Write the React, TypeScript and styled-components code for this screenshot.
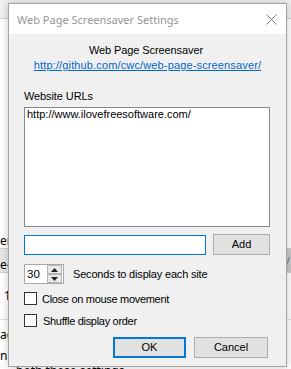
import React from "react";
import styled, { createGlobalStyle } from "styled-components";

const Global = createGlobalStyle`
  html, body { margin: 0; padding: 0; width: 291px; height: 369px; overflow: hidden; background: #fff; }
  #root { width: 291px; height: 369px; position: relative; overflow: hidden; }
`;

/* ---------- backdrop (page behind the dialog) ---------- */
const Page = styled.div`
  display: flex;
  flex-direction: column;
  width: 291px;
  height: 369px;
  font-family: "Noto Sans", "Liberation Sans", sans-serif;
  font-size: 12px;
  color: #000;
`;
const Toolbar = styled.div`
  height: 18px;
  background: #f0f0f0;
  border-bottom: 1px solid #d6d6d6;
  flex: none;
`;
const BlankArea = styled.div`
  height: 229px;
  display: flex;
  align-items: flex-end;
  flex: none;
`;
const Frag = styled.div<{ $pad?: number }>`
  line-height: 14px;
  padding-left: ${(p) => p.$pad ?? 0}px;
  white-space: nowrap;
`;
const Band = styled.div`
  height: 23px;
  flex: none;
  background: #e6e6e6;
  border-top: 1px solid #d0d0d0;
  border-bottom: 1px solid #d0d0d0;
  display: flex;
  align-items: flex-end;
  justify-content: space-between;
`;
const BandEdge = styled.div`
  width: 5px;
  height: 23px;
  background: #c9c9c9;
  color: #777;
  font-size: 11px;
  line-height: 23px;
`;
const TableRow = styled.div<{ $h: number; $line?: boolean; $end?: boolean }>`
  height: ${(p) => p.$h}px;
  flex: none;
  display: flex;
  align-items: ${(p) => (p.$end ? "flex-end" : "center")};
  border-bottom: ${(p) => (p.$line ? "1px solid #e0e0e0" : "none")};
`;
const BottomRow = styled.div`
  flex: none;
  padding-top: 1px;
`;

/* ---------- dialog ---------- */
const Dialog = styled.div`
  position: absolute;
  left: 8px;
  top: 3px;
  width: 279px;
  height: 364px;
  box-sizing: border-box;
  border: 1px solid #a3a3a3;
  background: #f0f0f0;
  box-shadow: 0 0 8px rgba(0, 0, 0, 0.22);
  display: flex;
  flex-direction: column;
`;
const TitleBar = styled.div`
  height: 30px;
  flex: none;
  background: #fff;
  display: flex;
  align-items: center;
  justify-content: space-between;
  padding: 0 9px 0 8px;
`;
const Title = styled.div`
  font-family: "Noto Sans", "Open Sans", sans-serif;
  font-size: 11px;
  color: #959595;
  padding-top: 1px;
`;
const Close = styled.svg`
  width: 11px;
  height: 11px;
  display: block;
`;
const Body = styled.div`
  flex: 1;
  display: flex;
  flex-direction: column;
  padding: 10px 15px 0 15px;
  font-family: "Liberation Sans", Arial, sans-serif;
  font-size: 11px;
  line-height: 13px;
  color: #000;
`;
const Header = styled.div`
  text-align: center;
  padding-right: 3px;
  letter-spacing: -0.1px;
`;
const Link = styled.a`
  display: block;
  text-align: center;
  margin-top: 2px;
  color: #0066cc;
  text-decoration: underline;
  letter-spacing: 0.14px;
`;
const FieldLabel = styled.div`
  margin-top: 18px;
  letter-spacing: -0.1px;
`;
const ListBox = styled.div`
  margin-top: 4px;
  height: 120px;
  box-sizing: border-box;
  border: 1px solid #828790;
  background: #fff;
  padding: 0 2px;
  width: 246px;
`;
const AddRow = styled.div`
  margin-top: 7px;
  display: flex;
  align-items: flex-start;
  gap: 7px;
`;
const TextInput = styled.div`
  margin-top: 1px;
  width: 182px;
  height: 20px;
  box-sizing: border-box;
  border: 1px solid #0078d7;
  background: #fff;
`;
const Button = styled.div<{ $w: number; $default?: boolean }>`
  width: ${(p) => p.$w}px;
  height: 21px;
  box-sizing: border-box;
  background: #e1e1e1;
  border: ${(p) => (p.$default ? "2px solid #0078d7" : "1px solid #adadad")};
  display: flex;
  align-items: center;
  justify-content: center;
`;
const SpinRow = styled.div`
  margin-top: 9px;
  display: flex;
  align-items: center;
`;
const Spin = styled.div`
  width: 40px;
  height: 20px;
  box-sizing: border-box;
  border: 1px solid #a9a9a9;
  background: #fff;
  display: flex;
  align-items: center;
  justify-content: space-between;
  padding: 0 1px 0 2px;
`;
const SpinValue = styled.div`
  font-size: 11.5px;
`;
const SpinButtons = styled.div`
  width: 15px;
  height: 18px;
  display: flex;
  flex-direction: column;
`;
const SpinBtn = styled.div`
  flex: 1;
  box-sizing: border-box;
  border: 1px solid #b5b5b5;
  background: #e8e8e8;
  display: flex;
  align-items: center;
  justify-content: center;
`;
const SpinLabel = styled.div`
  margin-left: 9px;
  letter-spacing: -0.18px;
  padding-top: 1px;
`;
const CheckRow = styled.div<{ $top: number }>`
  margin-top: ${(p) => p.$top}px;
  display: flex;
  align-items: center;
  height: 13px;
`;
const Box = styled.div`
  width: 13px;
  height: 13px;
  box-sizing: border-box;
  border: 1px solid #333;
  background: #fff;
  flex: none;
`;
const CheckLabel = styled.div<{ $gap: number }>`
  margin-left: ${(p) => p.$gap}px;
  letter-spacing: -0.3px;
  padding-top: 1px;
`;
const ButtonRow = styled.div`
  margin-top: 10px;
  display: flex;
  justify-content: flex-end;
  gap: 8px;
  padding-right: 3px;
`;

const Tri = ({ up }: { up?: boolean }) => (
  <svg width="7" height="4" viewBox="0 0 7 4">
    <polygon points={up ? "3.5,0 7,4 0,4" : "0,0 7,0 3.5,4"} fill="#222" />
  </svg>
);

export default function App() {
  return (
    <>
      <Global />
      <Page>
        <Toolbar />
        <BlankArea>
          <Frag>er settings</Frag>
        </BlankArea>
        <Band>
          <Frag>e-Screen</Frag>
          <BandEdge>/</BandEdge>
        </Band>
        <TableRow $h={46} $line>
          <Frag $pad={4}>1</Frag>
        </TableRow>
        <TableRow $h={22} $end>
          <Frag>ag</Frag>
        </TableRow>
        <TableRow $h={21} $end>
          <Frag>n</Frag>
        </TableRow>
        <BottomRow>
          <Frag $pad={16}>both these settings</Frag>
        </BottomRow>
      </Page>
      <Dialog>
        <TitleBar>
          <Title>Web Page Screensaver Settings</Title>
          <Close viewBox="0 0 11 11">
            <path d="M0.5 0.5 L10.5 10.5 M10.5 0.5 L0.5 10.5" stroke="#7d7d7d" strokeWidth="1" fill="none" />
          </Close>
        </TitleBar>
        <Body>
          <Header>Web Page Screensaver</Header>
          <Link>http://github.com/cwc/web-page-screensaver/</Link>
          <FieldLabel>Website URLs</FieldLabel>
          <ListBox>http://www.ilovefreesoftware.com/</ListBox>
          <AddRow>
            <TextInput />
            <Button $w={57}>Add</Button>
          </AddRow>
          <SpinRow>
            <Spin>
              <SpinValue>30</SpinValue>
              <SpinButtons>
                <SpinBtn><Tri up /></SpinBtn>
                <SpinBtn><Tri /></SpinBtn>
              </SpinButtons>
            </Spin>
            <SpinLabel>Seconds to display each site</SpinLabel>
          </SpinRow>
          <CheckRow $top={8}>
            <Box />
            <CheckLabel $gap={5}>Close on mouse movement</CheckLabel>
          </CheckRow>
          <CheckRow $top={9}>
            <Box />
            <CheckLabel $gap={6}>Shuffle display order</CheckLabel>
          </CheckRow>
          <ButtonRow>
            <Button $w={73} $default>OK</Button>
            <Button $w={74}>Cancel</Button>
          </ButtonRow>
        </Body>
      </Dialog>
    </>
  );
}
